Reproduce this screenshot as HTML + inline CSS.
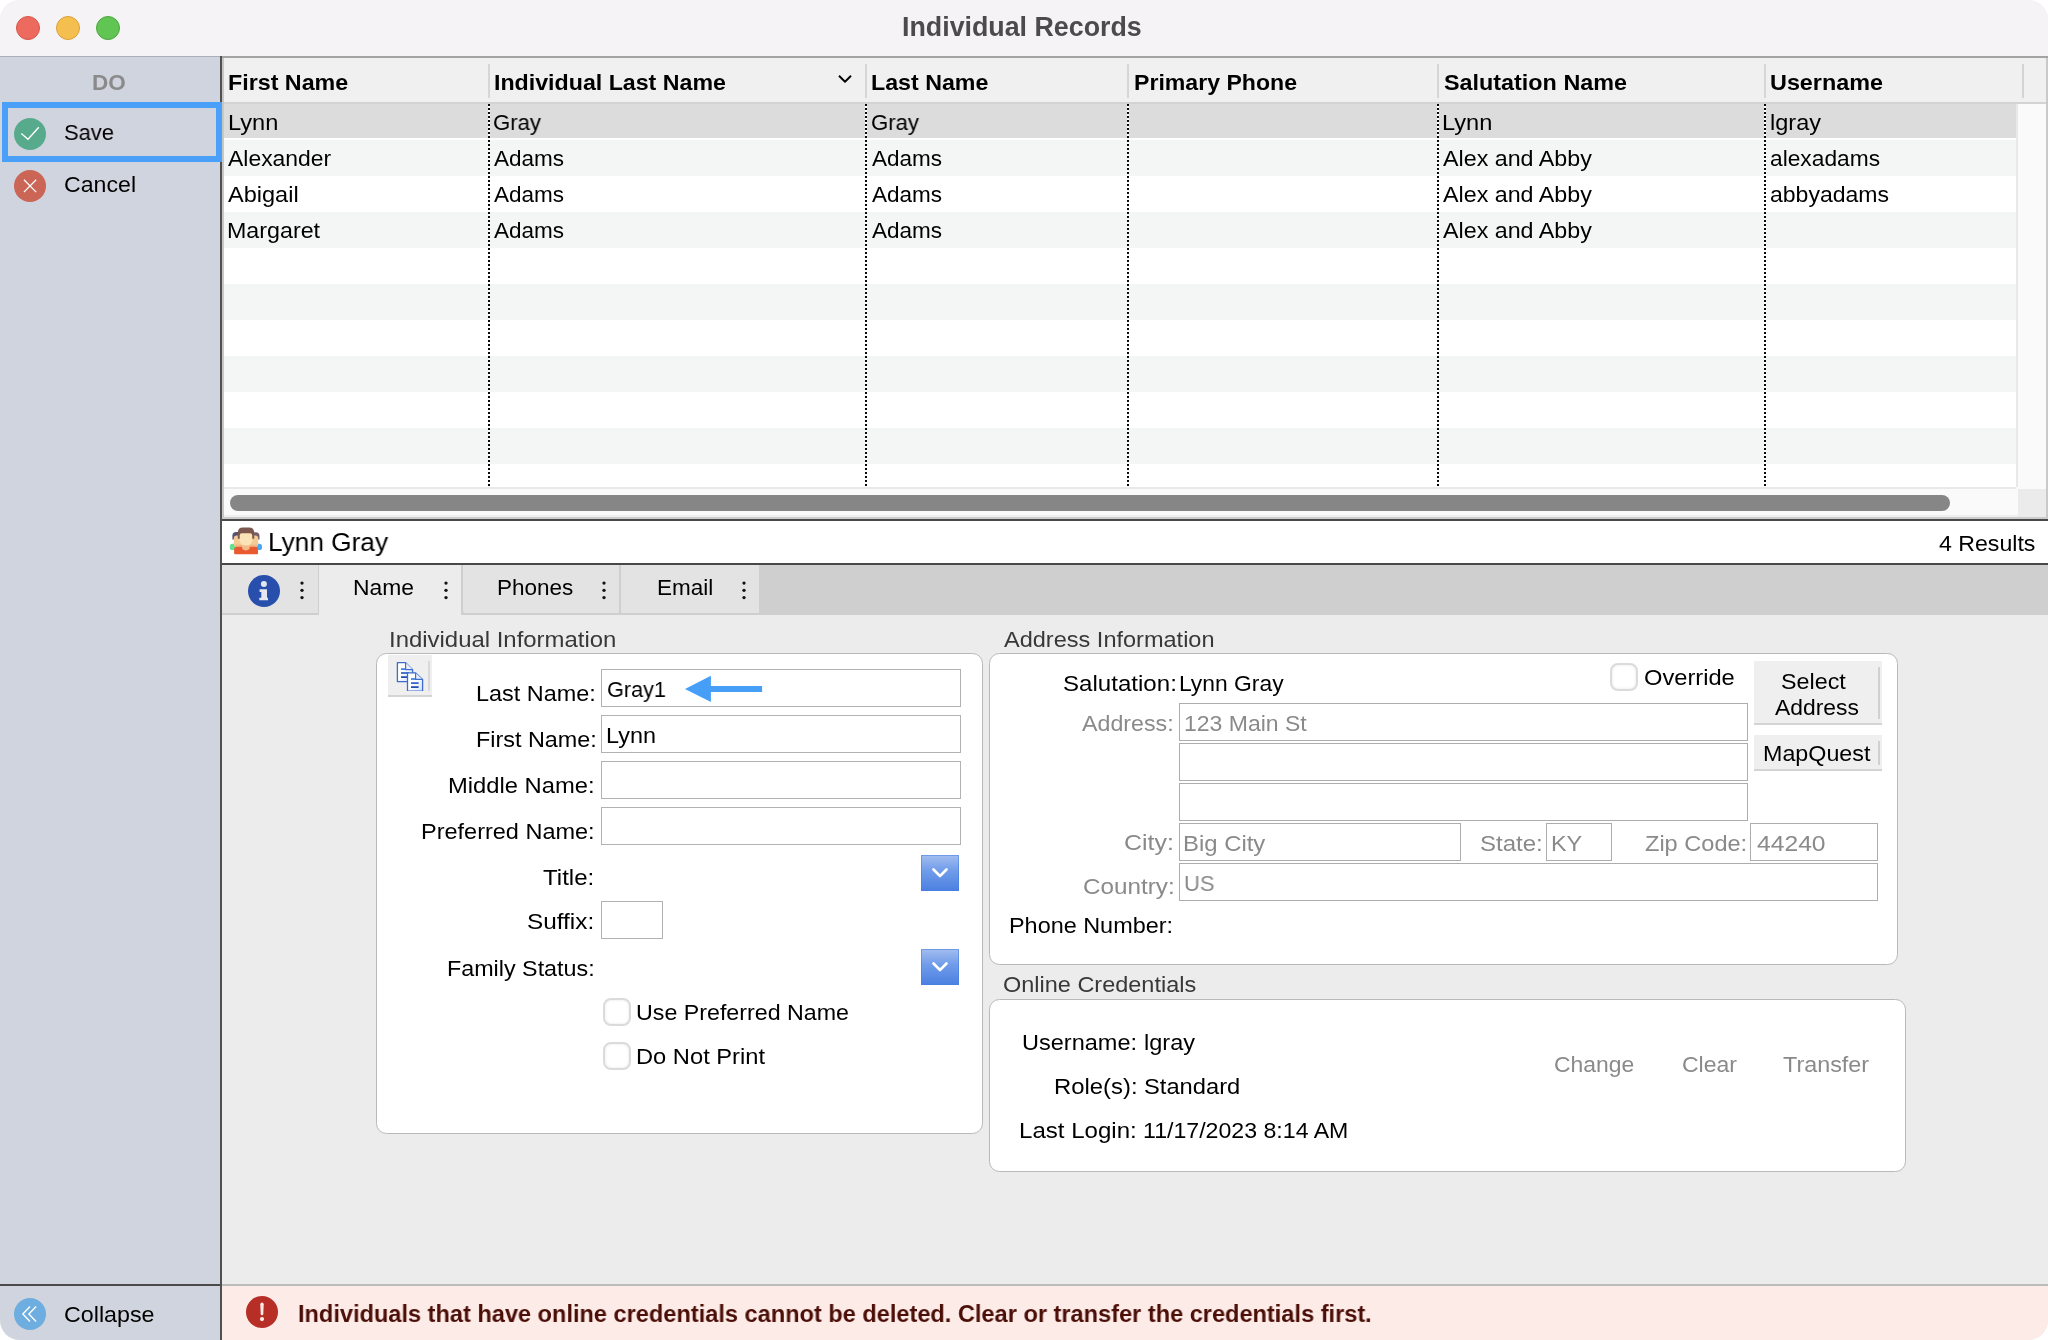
<!DOCTYPE html>
<html lang="en"><head><meta charset="utf-8"><title>Individual Records</title>
<style>
html,body{margin:0;padding:0;background:#fff;}
body{width:2048px;height:1340px;position:relative;overflow:hidden;font-family:"Liberation Sans",sans-serif;}
#win{position:absolute;left:0;top:0;width:2048px;height:1340px;border-radius:20px;overflow:hidden;background:#ececec;}
#win div,#win span.t,#win svg{position:absolute;}
span.t{will-change:transform;transform-origin:0 0;white-space:pre;line-height:1;display:block;}
.fld{box-sizing:border-box;border:1px solid #b2b2b2;background:#fff;}
.fld2{box-sizing:border-box;border:1px solid #adadad;background:#fff;}
.grp{box-sizing:border-box;border:1px solid #b9b9b9;background:#fff;border-radius:10.5px;}
.cb{box-sizing:border-box;border:2px solid #dbdbdb;background:#fff;border-radius:8px;box-shadow:inset 0 0 3px rgba(0,0,0,.10);}
.btn{background:#efefef;border-bottom:2px solid #d4d4d4;box-sizing:border-box;}
.dd{background:linear-gradient(#a3bdf0 0%,#6f9be9 45%,#4b80e1 100%);box-shadow:inset 0 0 0 1px rgba(70,125,225,.55);}
</style></head><body><div id="win">

<div style="left:0px;top:0px;width:2048px;height:56px;background:#f5f3f6;"></div>
<div style="left:0px;top:56px;width:2048px;height:2px;background:#a3a3a3;"></div>
<div style="left:0px;top:56px;width:220px;height:1px;background:#aaaeb8;"></div>
<div style="left:16px;top:16px;width:24px;height:24px;border-radius:50%;background:#ed6a5e;box-sizing:border-box;border:1px solid #d5554a;"></div>
<div style="left:56px;top:16px;width:24px;height:24px;border-radius:50%;background:#f5bf4f;box-sizing:border-box;border:1px solid #d9a13b;"></div>
<div style="left:96px;top:16px;width:24px;height:24px;border-radius:50%;background:#61c554;box-sizing:border-box;border:1px solid #4ba63f;"></div>
<span class="t" style="left:902.00px;top:14px;font-size:26.8px;color:#4d4a4d;font-weight:bold;">Individual Records</span>
<div style="left:0px;top:57px;width:220px;height:1283px;background:#d0d4de;"></div>
<div style="left:220px;top:56px;width:2px;height:1284px;background:#505050;"></div>
<div style="left:0px;top:1284px;width:220px;height:2px;background:#4a4a4a;"></div>
<span class="t" style="left:92.10px;top:72px;font-size:22.5px;color:#8a8a8a;font-weight:bold;">DO</span>
<div style="left:2px;top:102px;width:220px;height:60px;box-sizing:border-box;border:6px solid #4a9ff9;"></div>
<svg style="left:14px;top:118px" width="32" height="32" viewBox="0 0 32 32"><circle cx="16" cy="16" r="16" fill="#57ab8c"/><path d="M7.3 15.5 L14 21.2 L24.8 9.2" fill="none" stroke="#fff" stroke-width="1.35"/></svg>
<span class="t" style="left:64.00px;top:122px;font-size:22.5px;color:#000;transform:scaleX(0.9745);">Save</span>
<svg style="left:14px;top:170px" width="32" height="32" viewBox="0 0 32 32"><circle cx="16" cy="16" r="16" fill="#cb6556"/><path d="M9.9 9.8 L22.2 22.1 M22.2 9.8 L9.9 22.1" fill="none" stroke="#fff" stroke-width="1.3"/></svg>
<span class="t" style="left:64.00px;top:174px;font-size:22.5px;color:#000;transform:scaleX(1.0285);">Cancel</span>
<svg style="left:14px;top:1298px" width="32" height="32" viewBox="0 0 32 32"><circle cx="16" cy="16" r="16" fill="#6eaddf"/><path d="M16 8.6 L8.8 16 L16 23.5 M22.1 8.6 L14.9 16 L22.1 23.5" fill="none" stroke="#fff" stroke-width="1.4"/></svg>
<span class="t" style="left:63.80px;top:1304px;font-size:22.5px;color:#000;transform:scaleX(1.0341);">Collapse</span>
<div style="left:222px;top:58px;width:1824px;height:430px;background:#fff;"></div>
<div style="left:2046px;top:58px;width:2px;height:463px;background:#c9c9c9;"></div>
<div style="left:222px;top:58px;width:1824px;height:44px;background:#f0f0f0;"></div>
<div style="left:222px;top:102px;width:1824px;height:2px;background:#d3d3d3;"></div>
<div style="left:222px;top:140px;width:1794px;height:36px;background:#f4f5f5;"></div>
<div style="left:222px;top:212px;width:1794px;height:36px;background:#f4f5f5;"></div>
<div style="left:222px;top:284px;width:1794px;height:36px;background:#f4f5f5;"></div>
<div style="left:222px;top:356px;width:1794px;height:36px;background:#f4f5f5;"></div>
<div style="left:222px;top:428px;width:1794px;height:36px;background:#f4f5f5;"></div>
<div style="left:222px;top:104px;width:1794px;height:34px;background:#dcdcdc;"></div>
<div style="left:488px;top:64px;width:2px;height:34px;background:#d6d6d6;"></div>
<div style="left:488px;top:104px;width:2px;height:383px;background:repeating-linear-gradient(to bottom,#0a0a0a 0,#0a0a0a 2px,#fff 2px,#fff 4px);"></div>
<div style="left:865px;top:64px;width:2px;height:34px;background:#d6d6d6;"></div>
<div style="left:865px;top:104px;width:2px;height:383px;background:repeating-linear-gradient(to bottom,#0a0a0a 0,#0a0a0a 2px,#fff 2px,#fff 4px);"></div>
<div style="left:1127px;top:64px;width:2px;height:34px;background:#d6d6d6;"></div>
<div style="left:1127px;top:104px;width:2px;height:383px;background:repeating-linear-gradient(to bottom,#0a0a0a 0,#0a0a0a 2px,#fff 2px,#fff 4px);"></div>
<div style="left:1437px;top:64px;width:2px;height:34px;background:#d6d6d6;"></div>
<div style="left:1437px;top:104px;width:2px;height:383px;background:repeating-linear-gradient(to bottom,#0a0a0a 0,#0a0a0a 2px,#fff 2px,#fff 4px);"></div>
<div style="left:1764px;top:64px;width:2px;height:34px;background:#d6d6d6;"></div>
<div style="left:1764px;top:104px;width:2px;height:383px;background:repeating-linear-gradient(to bottom,#0a0a0a 0,#0a0a0a 2px,#fff 2px,#fff 4px);"></div>
<div style="left:2021.5px;top:64px;width:2px;height:34px;background:#d3d3d3;"></div>
<span class="t" style="left:228.20px;top:72px;font-size:22.5px;color:#000;font-weight:bold;transform:scaleX(1.0335);">First Name</span>
<span class="t" style="left:493.80px;top:72px;font-size:22.5px;color:#000;font-weight:bold;transform:scaleX(1.0306);">Individual Last Name</span>
<span class="t" style="left:871.40px;top:72px;font-size:22.5px;color:#000;font-weight:bold;transform:scaleX(1.0316);">Last Name</span>
<span class="t" style="left:1133.60px;top:72px;font-size:22.5px;color:#000;font-weight:bold;transform:scaleX(1.0264);">Primary Phone</span>
<span class="t" style="left:1443.60px;top:72px;font-size:22.5px;color:#000;font-weight:bold;transform:scaleX(1.0380);">Salutation Name</span>
<span class="t" style="left:1770.40px;top:72px;font-size:22.5px;color:#000;font-weight:bold;transform:scaleX(1.0386);">Username</span>
<svg style="left:836px;top:73px" width="18" height="12" viewBox="0 0 18 12"><path d="M3 2.8 L9 8.7 L15 2.8" fill="none" stroke="#000" stroke-width="1.9" stroke-linejoin="round"/></svg>
<span class="t" style="left:227.60px;top:112px;font-size:22.5px;color:#000;transform:scaleX(1.0498);">Lynn</span>
<span class="t" style="left:493.20px;top:112px;font-size:22.5px;color:#000;transform:scaleX(0.9834);">Gray</span>
<span class="t" style="left:871.40px;top:112px;font-size:22.5px;color:#000;transform:scaleX(0.9834);">Gray</span>
<span class="t" style="left:1442.00px;top:112px;font-size:22.5px;color:#000;transform:scaleX(1.0498);">Lynn</span>
<span class="t" style="left:1770.20px;top:112px;font-size:22.5px;color:#000;transform:scaleX(1.0448);">lgray</span>
<span class="t" style="left:228.20px;top:148px;font-size:22.5px;color:#000;transform:scaleX(1.0187);">Alexander</span>
<span class="t" style="left:494.20px;top:148px;font-size:22.5px;color:#000;">Adams</span>
<span class="t" style="left:872.40px;top:148px;font-size:22.5px;color:#000;">Adams</span>
<span class="t" style="left:1442.80px;top:148px;font-size:22.5px;color:#000;transform:scaleX(1.0341);">Alex and Abby</span>
<span class="t" style="left:1770.20px;top:148px;font-size:22.5px;color:#000;transform:scaleX(1.0110);">alexadams</span>
<span class="t" style="left:228.20px;top:184px;font-size:22.5px;color:#000;transform:scaleX(1.0459);">Abigail</span>
<span class="t" style="left:494.20px;top:184px;font-size:22.5px;color:#000;">Adams</span>
<span class="t" style="left:872.40px;top:184px;font-size:22.5px;color:#000;">Adams</span>
<span class="t" style="left:1442.80px;top:184px;font-size:22.5px;color:#000;transform:scaleX(1.0341);">Alex and Abby</span>
<span class="t" style="left:1770.20px;top:184px;font-size:22.5px;color:#000;transform:scaleX(1.0232);">abbyadams</span>
<span class="t" style="left:227.00px;top:220px;font-size:22.5px;color:#000;transform:scaleX(1.0332);">Margaret</span>
<span class="t" style="left:494.20px;top:220px;font-size:22.5px;color:#000;">Adams</span>
<span class="t" style="left:872.40px;top:220px;font-size:22.5px;color:#000;">Adams</span>
<span class="t" style="left:1442.80px;top:220px;font-size:22.5px;color:#000;transform:scaleX(1.0341);">Alex and Abby</span>
<div style="left:2016px;top:104px;width:30px;height:385px;background:#fafafa;"></div>
<div style="left:2016px;top:104px;width:1.5px;height:385px;background:#e9e9e9;"></div>
<div style="left:222px;top:487px;width:1824px;height:30px;background:#fafafa;"></div>
<div style="left:222px;top:487px;width:1794px;height:2px;background:#e9e9e9;"></div>
<div style="left:2018px;top:489px;width:28px;height:28px;background:#ebebeb;"></div>
<div style="left:230px;top:495px;width:1720px;height:16px;border-radius:8px;background:#868686;"></div>
<div style="left:224px;top:515px;width:1794px;height:2px;background:#efefef;"></div>
<div style="left:222px;top:517px;width:1826px;height:2px;background:#cccccc;"></div>
<div style="left:222px;top:58px;width:2px;height:459px;background:#c9c7c5;"></div>
<div style="left:222px;top:519px;width:1826px;height:2px;background:#484848;"></div>
<div style="left:222px;top:521px;width:1826px;height:42px;background:#fff;"></div>
<div style="left:222px;top:563px;width:1826px;height:2px;background:#484848;"></div>
<span class="t" style="left:268.00px;top:529px;font-size:26.6px;color:#000;transform:scaleX(0.9862);">Lynn Gray</span>
<span class="t" style="left:1938.60px;top:533px;font-size:22.5px;color:#000;transform:scaleX(1.0277);">4 Results</span>
<svg style="left:229px;top:526px" width="34" height="29" viewBox="0 0 34 29">
<rect x="0.8" y="17.8" width="9" height="6.2" rx="2.6" fill="#63e090"/>
<rect x="24.2" y="17.8" width="8.8" height="6.2" rx="2.6" fill="#47a8f5"/>
<path d="M3.4 13.5 V9.6 Q3.4 5.9 7.2 5.9 H10.5 V13.5 Z" fill="#555270"/>
<path d="M30.5 13.5 V9.8 Q30.5 6.2 26.8 6.2 H23.5 V13.5 Z" fill="#7a5f68"/>
<rect x="4.8" y="9.6" width="9" height="11.4" rx="3" fill="#f5cb94"/>
<rect x="20.2" y="9.6" width="9" height="11.4" rx="3" fill="#f5cb94"/>
<rect x="6.2" y="18.6" width="7.4" height="2.6" fill="#f2b685"/><rect x="20.4" y="18.6" width="7.4" height="2.6" fill="#f2b685"/>
<path d="M5.1 27.2 V24 Q5.1 20.7 8.4 20.7 H25.7 Q29 20.7 29 24 V27.2 Q29 28.3 27.9 28.3 H6.2 Q5.1 28.3 5.1 27.2 Z" fill="#e95a30"/>
<path d="M12.9 18.8 H20.9 V21 Q20.9 24 16.9 24.5 Q12.9 24 12.9 21 Z" fill="#f3bb8a"/>
<path d="M8.8 12.8 V7 Q8.8 1.6 14 1.6 H20 Q25.2 1.6 25.2 7 V12.8 Z" fill="#7b574d"/>
<path d="M10.7 9.6 Q10.7 7.3 13 7.3 H21 Q23.2 7.3 23.2 9.6 V14 Q23.2 19.5 17 19.5 Q10.7 19.5 10.7 14 Z" fill="#fae3b7"/>
</svg>
<div style="left:222px;top:565px;width:1826px;height:50px;background:#cfcfcf;"></div>
<div style="left:222px;top:565px;width:95.5px;height:48px;background:#e3e3e3;"></div>
<div style="left:319px;top:565px;width:142px;height:50px;background:#ececec;"></div>
<div style="left:462.5px;top:565px;width:156.5px;height:48px;background:#e3e3e3;border-bottom-left-radius:2px;"></div>
<div style="left:620.5px;top:565px;width:138.5px;height:48px;background:#e3e3e3;"></div>
<svg style="left:298px;top:578px" width="8" height="26" viewBox="0 0 8 26"><circle cx="4" cy="5.1" r="1.65" fill="#111"/><circle cx="4" cy="12.3" r="1.65" fill="#111"/><circle cx="4" cy="19.6" r="1.65" fill="#111"/></svg>
<svg style="left:441.5px;top:578px" width="8" height="26" viewBox="0 0 8 26"><circle cx="4" cy="5.1" r="1.65" fill="#111"/><circle cx="4" cy="12.3" r="1.65" fill="#111"/><circle cx="4" cy="19.6" r="1.65" fill="#111"/></svg>
<svg style="left:600.4px;top:578px" width="8" height="26" viewBox="0 0 8 26"><circle cx="4" cy="5.1" r="1.65" fill="#111"/><circle cx="4" cy="12.3" r="1.65" fill="#111"/><circle cx="4" cy="19.6" r="1.65" fill="#111"/></svg>
<svg style="left:740.1px;top:578px" width="8" height="26" viewBox="0 0 8 26"><circle cx="4" cy="5.1" r="1.65" fill="#111"/><circle cx="4" cy="12.3" r="1.65" fill="#111"/><circle cx="4" cy="19.6" r="1.65" fill="#111"/></svg>
<svg style="left:248px;top:575px" width="32" height="32" viewBox="0 0 32 32"><circle cx="16" cy="16" r="16" fill="#294fad"/>
<circle cx="15.9" cy="8.9" r="3" fill="#e6e8f0"/><path d="M11.6 14.2 H19 V22.8 H20 V25.3 H11.3 V22.8 H13.3 V16.9 H11.6 Z" fill="#e6e8f0"/></svg>
<span class="t" style="left:353.00px;top:577px;font-size:22.5px;color:#000;transform:scaleX(1.0165);">Name</span>
<span class="t" style="left:496.80px;top:577px;font-size:22.5px;color:#000;transform:scaleX(0.9961);">Phones</span>
<span class="t" style="left:656.60px;top:577px;font-size:22.5px;color:#000;transform:scaleX(0.9946);">Email</span>
<span class="t" style="left:389.00px;top:629px;font-size:22.5px;color:#383838;transform:scaleX(1.0631);">Individual Information</span>
<div class="grp" style="left:376px;top:653px;width:607px;height:481px;"></div>
<div class="btn" style="left:388px;top:655px;width:44px;height:42px;"></div>
<div style="left:428px;top:661px;width:2px;height:30px;background:#d9d9d9;"></div>
<svg style="left:394px;top:660px" width="32" height="31" viewBox="0 0 32 31">
<defs><linearGradient id="pg" x1="0" y1="0" x2="1" y2="1"><stop offset="0.45" stop-color="#fff"/><stop offset="1" stop-color="#cfe0fb"/></linearGradient>
<linearGradient id="ln" x1="0" y1="0" x2="0" y2="1"><stop offset="0" stop-color="#3b7de2"/><stop offset="1" stop-color="#1c3c9e"/></linearGradient></defs>
<path d="M3.4 2.6 H11.6 L18.6 9.6 V21.6 H3.4 Z" fill="url(#pg)" stroke="#3d6ccc" stroke-width="1.3" stroke-linejoin="round"/>
<path d="M11.6 2.6 V9.6 H18.6" fill="#eaf1fd" stroke="#3d6ccc" stroke-width="1.2" stroke-linejoin="round"/>
<path d="M7 9.1 H11.4" stroke="#3b7de2" stroke-width="1.7"/><path d="M7 13 H15" stroke="#2a5cc4" stroke-width="1.7"/><path d="M7 17.1 H15" stroke="#1f44a8" stroke-width="1.7"/>
<path d="M13.5 31.2 V12.9 H21.6 L28.6 19.4 V31.2 Z" fill="url(#pg)" stroke="#3d6ccc" stroke-width="1.3" stroke-linejoin="round"/>
<path d="M21.6 12.9 V19.4 H28.6" fill="#eaf1fd" stroke="#3d6ccc" stroke-width="1.2" stroke-linejoin="round"/>
<path d="M17 19 H21.4" stroke="#3b7de2" stroke-width="1.7"/><path d="M17 23.1 H24.6" stroke="#2a5cc4" stroke-width="1.7"/><path d="M17 27.1 H24.6" stroke="#1f44a8" stroke-width="1.7"/>
</svg>
<span class="t" style="left:476.20px;top:683px;font-size:22.5px;color:#000;transform:scaleX(1.0407);">Last Name:</span>
<span class="t" style="left:476.20px;top:729px;font-size:22.5px;color:#000;transform:scaleX(1.0386);">First Name:</span>
<span class="t" style="left:447.80px;top:775px;font-size:22.5px;color:#000;transform:scaleX(1.0561);">Middle Name:</span>
<span class="t" style="left:420.80px;top:821px;font-size:22.5px;color:#000;transform:scaleX(1.0439);">Preferred Name:</span>
<span class="t" style="left:543.20px;top:867px;font-size:22.5px;color:#000;transform:scaleX(1.0686);">Title:</span>
<span class="t" style="left:527.20px;top:911px;font-size:22.5px;color:#000;transform:scaleX(1.0820);">Suffix:</span>
<span class="t" style="left:446.80px;top:958px;font-size:22.5px;color:#000;transform:scaleX(1.0357);">Family Status:</span>
<div class="fld" style="left:601px;top:669px;width:360px;height:38px;"></div>
<div class="fld" style="left:601px;top:715px;width:360px;height:38px;"></div>
<div class="fld" style="left:601px;top:761px;width:360px;height:38px;"></div>
<div class="fld" style="left:601px;top:807px;width:360px;height:38px;"></div>
<div class="fld" style="left:601px;top:901px;width:62px;height:38px;"></div>
<span class="t" style="left:607.00px;top:679px;font-size:22.5px;color:#000;transform:scaleX(0.9623);">Gray1</span>
<span class="t" style="left:606.00px;top:725px;font-size:22.5px;color:#000;transform:scaleX(1.0414);">Lynn</span>
<svg style="left:680px;top:672px" width="90" height="32" viewBox="0 0 90 32"><path d="M5 17 L30.9 3.8 L30.9 13.9 L82.1 13.9 L82.1 19.9 L30.9 19.9 L30.9 30.1 Z" fill="#479ef7"/></svg>
<div class="dd" style="left:921px;top:855px;width:38px;height:36px;"></div>
<svg style="left:921px;top:855px" width="38" height="36" viewBox="0 0 38 36"><path d="M12.5 14.5 L19 21 L25.5 14.5" fill="none" stroke="#fff" stroke-width="2.6" stroke-linecap="round" stroke-linejoin="round"/></svg>
<div class="dd" style="left:921px;top:949px;width:38px;height:36px;"></div>
<svg style="left:921px;top:949px" width="38" height="36" viewBox="0 0 38 36"><path d="M12.5 14.5 L19 21 L25.5 14.5" fill="none" stroke="#fff" stroke-width="2.6" stroke-linecap="round" stroke-linejoin="round"/></svg>
<div class="cb" style="left:603px;top:998px;width:28px;height:28px;"></div>
<div class="cb" style="left:603px;top:1042px;width:28px;height:28px;"></div>
<span class="t" style="left:635.80px;top:1002px;font-size:22.5px;color:#000;transform:scaleX(1.0325);">Use Preferred Name</span>
<span class="t" style="left:635.80px;top:1046px;font-size:22.5px;color:#000;transform:scaleX(1.0530);">Do Not Print</span>
<span class="t" style="left:1004.40px;top:629px;font-size:22.5px;color:#383838;transform:scaleX(1.0456);">Address Information</span>
<div class="grp" style="left:989px;top:653px;width:909px;height:312px;"></div>
<span class="t" style="left:1062.80px;top:673px;font-size:22.5px;color:#000;transform:scaleX(1.0706);">Salutation:</span>
<span class="t" style="left:1179.40px;top:673px;font-size:22.5px;color:#000;transform:scaleX(1.0155);">Lynn Gray</span>
<span class="t" style="left:1081.60px;top:713px;font-size:22.5px;color:#8a8a8a;transform:scaleX(1.0315);">Address:</span>
<span class="t" style="left:1124.40px;top:832px;font-size:22.5px;color:#8a8a8a;transform:scaleX(1.1067);">City:</span>
<span class="t" style="left:1082.60px;top:876px;font-size:22.5px;color:#8a8a8a;transform:scaleX(1.0775);">Country:</span>
<span class="t" style="left:1009.20px;top:915px;font-size:22.5px;color:#000;transform:scaleX(1.0406);">Phone Number:</span>
<div class="fld2" style="left:1179px;top:703px;width:569px;height:38px;"></div>
<div class="fld2" style="left:1179px;top:743px;width:569px;height:38px;"></div>
<div class="fld2" style="left:1179px;top:783px;width:569px;height:38px;"></div>
<div class="fld2" style="left:1179px;top:823px;width:282px;height:38px;"></div>
<div class="fld2" style="left:1546px;top:823px;width:66px;height:38px;"></div>
<div class="fld2" style="left:1750px;top:823px;width:128px;height:38px;"></div>
<div class="fld2" style="left:1179px;top:863px;width:699px;height:38px;"></div>
<span class="t" style="left:1184.20px;top:713px;font-size:22.5px;color:#8a8a8a;transform:scaleX(1.0224);">123 Main St</span>
<span class="t" style="left:1183.20px;top:833px;font-size:22.5px;color:#8a8a8a;transform:scaleX(1.0617);">Big City</span>
<span class="t" style="left:1479.60px;top:833px;font-size:22.5px;color:#8a8a8a;transform:scaleX(1.0679);">State:</span>
<span class="t" style="left:1551.00px;top:833px;font-size:22.5px;color:#8a8a8a;transform:scaleX(1.0400);">KY</span>
<span class="t" style="left:1644.80px;top:833px;font-size:22.5px;color:#8a8a8a;transform:scaleX(1.0470);">Zip Code:</span>
<span class="t" style="left:1756.60px;top:833px;font-size:22.5px;color:#8a8a8a;transform:scaleX(1.0957);">44240</span>
<span class="t" style="left:1184.20px;top:873px;font-size:22.5px;color:#8a8a8a;transform:scaleX(0.9773);">US</span>
<div class="cb" style="left:1610px;top:663px;width:28px;height:28px;"></div>
<span class="t" style="left:1643.80px;top:667px;font-size:22.5px;color:#000;transform:scaleX(1.0521);">Override</span>
<div class="btn" style="left:1754px;top:660.5px;width:128px;height:64px;"></div>
<div style="left:1878px;top:667px;width:1.5px;height:52px;background:#d0d0d0;"></div>
<span class="t" style="left:1781.40px;top:671px;font-size:22.5px;color:#000;transform:scaleX(1.0366);">Select</span>
<span class="t" style="left:1774.80px;top:697px;font-size:22.5px;color:#000;transform:scaleX(1.0157);">Address</span>
<div class="btn" style="left:1754px;top:735px;width:128px;height:36px;"></div>
<div style="left:1878px;top:741px;width:1.5px;height:24px;background:#d0d0d0;"></div>
<span class="t" style="left:1762.80px;top:743px;font-size:22.5px;color:#000;transform:scaleX(1.0346);">MapQuest</span>
<span class="t" style="left:1002.60px;top:974px;font-size:22.5px;color:#383838;transform:scaleX(1.0437);">Online Credentials</span>
<div class="grp" style="left:989px;top:998.5px;width:917px;height:173.5px;"></div>
<span class="t" style="left:1022.00px;top:1032px;font-size:22.5px;color:#000;transform:scaleX(1.0454);">Username:</span>
<span class="t" style="left:1053.60px;top:1076px;font-size:22.5px;color:#000;transform:scaleX(1.0609);">Role(s):</span>
<span class="t" style="left:1019.40px;top:1120px;font-size:22.5px;color:#000;transform:scaleX(1.0699);">Last Login:</span>
<span class="t" style="left:1144.40px;top:1032px;font-size:22.5px;color:#000;transform:scaleX(1.0448);">lgray</span>
<span class="t" style="left:1144.40px;top:1076px;font-size:22.5px;color:#000;transform:scaleX(1.0536);">Standard</span>
<span class="t" style="left:1143.40px;top:1120px;font-size:22.5px;color:#000;transform:scaleX(1.0280);">11/17/2023 8:14 AM</span>
<span class="t" style="left:1553.60px;top:1054px;font-size:22.5px;color:#8a8a8a;transform:scaleX(1.0176);">Change</span>
<span class="t" style="left:1682.20px;top:1054px;font-size:22.5px;color:#8a8a8a;transform:scaleX(1.0220);">Clear</span>
<span class="t" style="left:1783.20px;top:1054px;font-size:22.5px;color:#8a8a8a;transform:scaleX(1.0374);">Transfer</span>
<div style="left:222px;top:1284px;width:1826px;height:2px;background:#bcbcbc;"></div>
<div style="left:222px;top:1286px;width:1826px;height:54px;background:#fdebe8;"></div>
<svg style="left:246px;top:1296px" width="32" height="32" viewBox="0 0 32 32"><circle cx="16" cy="16" r="16" fill="#b62e26"/>
<path d="M14.3 8.2 Q14.3 6.6 16 6.6 Q17.7 6.6 17.7 8.2 L17.3 18.3 Q17.2 19.3 16 19.3 Q14.8 19.3 14.7 18.3 Z" fill="#fdeae7"/><circle cx="16" cy="23.1" r="2.1" fill="#fdeae7"/></svg>
<span class="t" style="left:297.80px;top:1302px;font-size:24.6px;color:#4b0f08;font-weight:bold;transform:scaleX(0.9581);">Individuals that have online credentials cannot be deleted. Clear or transfer the credentials first.</span>
</div></body></html>
